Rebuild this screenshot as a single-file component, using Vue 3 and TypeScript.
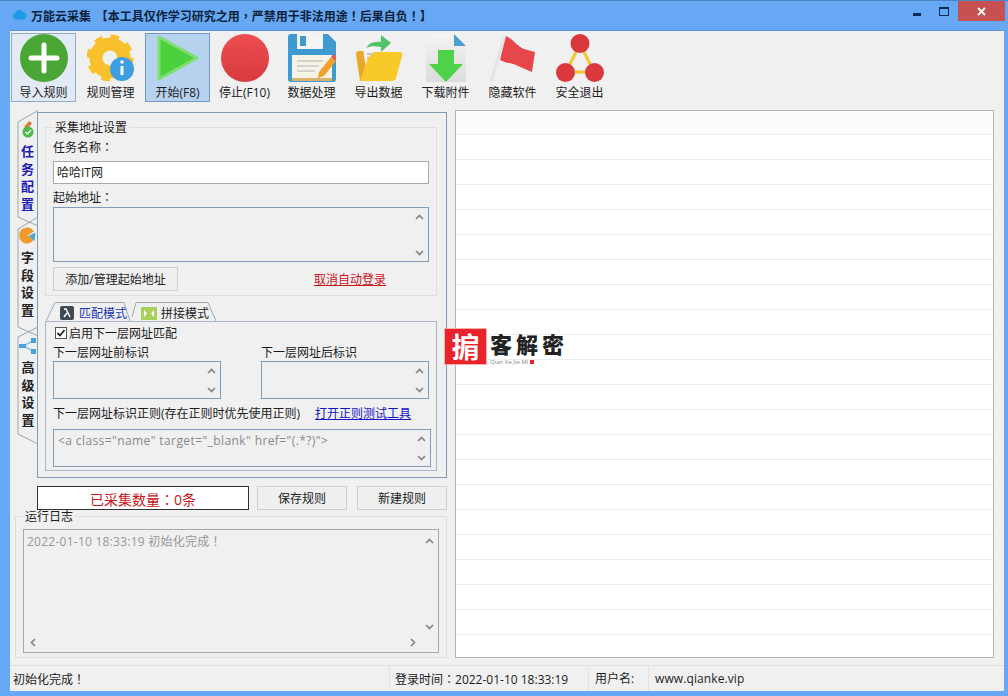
<script setup lang="ts">
const tools = [
  { id: 'add', label: '导入规则', state: 'hover' },
  { id: 'gear', label: '规则管理', state: '' },
  { id: 'play', label: '开始(F8)', state: 'active' },
  { id: 'stop', label: '停止(F10)', state: '' },
  { id: 'save', label: '数据处理', state: '' },
  { id: 'folder', label: '导出数据', state: '' },
  { id: 'file', label: '下载附件', state: '' },
  { id: 'flag', label: '隐藏软件', state: '' },
  { id: 'exit', label: '安全退出', state: '' },
]
const rows = Array.from({ length: 21 }, (_, i) => i)
</script>

<template>
  <div class="window">
    <div class="titlebar">
      <svg class="cloud" width="15" height="11" viewBox="0 0 15 11">
        <path d="M4 10.5a3.4 3.4 0 0 1-.6-6.7A4.2 4.2 0 0 1 11 3a3.8 3.8 0 0 1 .4 7.5z" fill="#1f9bea" />
      </svg>
      <span class="title">万能云采集 【本工具仅作学习研究之用<span class="p">，</span>严禁用于非法用途<span class="p">！</span>后果自负<span class="p">！</span>】</span>
      <div class="controls">
        <i class="min"></i>
        <i class="max"></i>
        <div class="close">
          <svg width="9" height="9" viewBox="0 0 9 9"><path d="M1 1l7 7M8 1L1 8" stroke="#fff" stroke-width="1.8" /></svg>
        </div>
      </div>
    </div>

    <div class="client">
      <div class="toolbar">
        <div v-for="t in tools" :key="t.id" class="tool" :class="t.state">
          <svg class="tool-icon" width="48" height="48" viewBox="0 0 48 48">
            <defs>
              <linearGradient id="redFill" x1="0" y1="0" x2="0" y2="1">
                <stop offset="0" stop-color="#ee4d51" />
                <stop offset="1" stop-color="#d73b3f" />
              </linearGradient>
              <linearGradient id="fileFill" x1="0" y1="0" x2="0" y2="1">
                <stop offset="0" stop-color="#f4f4f4" />
                <stop offset="1" stop-color="#dcdcdc" />
              </linearGradient>
            </defs>
            <template v-if="t.id === 'add'">
              <circle cx="24" cy="24" r="24" fill="#4ba735" />
              <path d="M24 11v26M11 24h26" stroke="#fff" stroke-width="5" stroke-linecap="round" />
            </template>
            <template v-else-if="t.id === 'gear'">
              <circle cx="23" cy="24" r="14" fill="none" stroke="#f8c02c" stroke-width="13" />
              <circle cx="23" cy="24" r="20.5" fill="none" stroke="#f8c02c" stroke-width="6" stroke-dasharray="8.1 8" />
              <circle cx="35" cy="35" r="12" fill="#3d9fe0" />
              <circle cx="35" cy="28" r="1.7" fill="#fff" />
              <path d="M35 32v9" stroke="#fff" stroke-width="3" />
            </template>
            <template v-else-if="t.id === 'play'">
              <path d="M5 3L43 24 5 45z" fill="#4bd13d" stroke="#7fe070" stroke-width="3" stroke-linejoin="round" />
            </template>
            <template v-else-if="t.id === 'stop'">
              <circle cx="24" cy="24" r="24" fill="url(#redFill)" />
            </template>
            <template v-else-if="t.id === 'save'">
              <path d="M3 0h37l8 8v37a3 3 0 0 1-3 3H3a3 3 0 0 1-3-3V3a3 3 0 0 1 3-3z" fill="#3f9ad2" />
              <rect x="9" y="0" width="26" height="15" fill="#f4f4f4" />
              <rect x="12" y="2" width="6" height="10" fill="#3f9ad2" />
              <rect x="4" y="21" width="40" height="23" fill="#f6f2e6" />
              <rect x="4" y="44" width="40" height="3" fill="#d9b36a" />
              <path d="M9 27h26M9 32h22M9 37h18" stroke="#c8c8c8" stroke-width="1.5" />
              <path d="M31 38l12-15 5 4-12 15-6 2z" fill="#f0a030" />
              <path d="M43 23l2.5-3 5 4-2.5 3z" fill="#e85a5a" />
            </template>
            <template v-else-if="t.id === 'folder'">
              <path d="M1 20a3 3 0 0 1 3-3h9l3 3-7 27H5z" fill="#e8a92a" />
              <path d="M8 14l20-1 3 18-20 4z" fill="#f4f4f4" />
              <path d="M12 20h14M12 24h12" stroke="#a8b8c8" stroke-width="1.5" />
              <path d="M13 24l6-6h26a2.500 2.500 0 0 1 2.400 3L41 44a4 4 0 0 1-4 3H5z" fill="#f8c928" />
              <path d="M11 14c3-5 8-7 15-6V1l10 8-10 9v-5c-6-1-11-1-15 1z" fill="#4ec36a" />
            </template>
            <template v-else-if="t.id === 'file'">
              <path d="M4 0h26l14 14v34H4z" fill="url(#fileFill)" />
              <path d="M32 0l12 12H32z" fill="#4b9fd0" />
              <path d="M16 16h16v14h9L24 48 7 30h9z" fill="#4ed24a" />
            </template>
            <template v-else-if="t.id === 'flag'">
              <path d="M15 4L2 47" stroke="#e4e4e4" stroke-width="3" />
              <path d="M17 2c7 3 12 11 18 13l11 3-3 20-14-6c-6-3-13-3-18-6z" fill="#e5474b" />
            </template>
            <template v-else>
              <path d="M24 10L10 38h28z" fill="none" stroke="#f6c42f" stroke-width="3" />
              <circle cx="24" cy="9.500" r="9.500" fill="#d9393d" />
              <circle cx="9.500" cy="38.500" r="9.500" fill="#d9393d" />
              <circle cx="38.500" cy="38.500" r="9.500" fill="#d9393d" />
            </template>
          </svg>
          <span class="tool-label">{{ t.label }}</span>
        </div>
      </div>

      <div class="body">
        <div class="left">
          <div class="config">
            <div class="side-tabs">
              <svg class="tab-lines" width="22" height="340" viewBox="0 0 22 340">
                <path d="M21 .5L1 12v95l20 9M21 107L1 119v98l20 9M21 217L1 227v97l20 10" fill="none" stroke="#9aa5af" />
              </svg>
              <div class="side-tab current t1">
                <svg width="16" height="18" viewBox="0 0 16 18">
                  <path d="M4 7l5-6 3 2-4 6z" fill="#e07a3c" />
                  <circle cx="8" cy="12" r="5.500" fill="#4cb848" />
                  <path d="M5.500 12l2 2 3.500-4" stroke="#fff" stroke-width="1.300" fill="none" />
                </svg>
                <b>任</b><b>务</b><b>配</b><b>置</b>
              </div>
              <div class="side-tab t2">
                <svg width="17" height="17" viewBox="0 0 17 17">
                  <path d="M8.500 8.500L15 4.500A8 8 0 1 0 15 12.500z" fill="#f29b2c" />
                  <path d="M9.500 9L16.500 5.500 15.500 14z" fill="#4ba6d8" />
                </svg>
                <b>字</b><b>段</b><b>设</b><b>置</b>
              </div>
              <div class="side-tab t3">
                <svg width="18" height="16" viewBox="0 0 18 16">
                  <path d="M4 8l10-5M4 8l10 5" stroke="#8cc4e4" stroke-width="1.500" />
                  <rect x="0" y="6" width="7" height="4" fill="#4aa3d8" />
                  <rect x="12" y="0" width="5" height="5" fill="#4aa3d8" />
                  <rect x="12" y="11" width="5" height="5" fill="#4aa3d8" />
                </svg>
                <b>高</b><b>级</b><b>设</b><b>置</b>
              </div>
            </div>

            <div class="panel">
              <fieldset class="group">
                <legend>采集地址设置</legend>
                <div class="field-label first">任务名称<span class="p">：</span></div>
                <div class="input">哈哈IT网</div>
                <div class="field-label second">起始地址<span class="p">：</span></div>
                <div class="memo start-url">
                  <div class="arrows">
                    <svg width="9" height="6" viewBox="0 0 9 6"><path d="M1 5l3.500-3.500L8 5" /></svg>
                    <svg width="9" height="6" viewBox="0 0 9 6"><path d="M1 1l3.500 3.500L8 1" /></svg>
                  </div>
                </div>
                <div class="url-actions">
                  <button class="btn manage">添加/管理起始地址</button>
                  <a class="link-red">取消自动登录</a>
                </div>
              </fieldset>

              <div class="mode-tabs">
                <svg class="mode-lines" width="176" height="20" viewBox="0 0 176 20">
                  <path d="M0 19L9 .5h69l6 18.500M86 15L90 .5h72L170 19" fill="none" stroke="#a0aab4" />
                </svg>
                <div class="mode-tab one">
                  <svg width="14" height="14" viewBox="0 0 14 14">
                    <rect width="14" height="14" rx="2" fill="#3f4a52" />
                    <path d="M4 3h2l4 8M7 7l-3 4" stroke="#fff" stroke-width="1.500" fill="none" />
                  </svg>
                  <span class="mode-current">匹配模式</span>
                </div>
                <div class="mode-tab two">
                  <svg width="16" height="13" viewBox="0 0 16 13">
                    <rect width="16" height="13" fill="#a9d05a" />
                    <path d="M3 3l3 3.500L3 10zM13 3l-3 3.500 3 3.500z" fill="#fff" />
                  </svg>
                  <span>拼接模式</span>
                </div>
              </div>

              <div class="mode-panel">
                <label class="check-row">
                  <span class="check">
                    <svg width="10" height="10" viewBox="0 0 10 10"><path d="M1.500 5l2.500 2.500L8.500 2" stroke="#222" stroke-width="1.800" fill="none" /></svg>
                  </span>
                  启用下一层网址匹配
                </label>
                <div class="pair">
                  <div>
                    <div class="pair-label">下一层网址前标识</div>
                    <div class="memo small">
                      <div class="arrows">
                        <svg width="9" height="6" viewBox="0 0 9 6"><path d="M1 5l3.500-3.500L8 5" /></svg>
                        <svg width="9" height="6" viewBox="0 0 9 6"><path d="M1 1l3.500 3.500L8 1" /></svg>
                      </div>
                    </div>
                  </div>
                  <div>
                    <div class="pair-label">下一层网址后标识</div>
                    <div class="memo small">
                      <div class="arrows">
                        <svg width="9" height="6" viewBox="0 0 9 6"><path d="M1 5l3.500-3.500L8 5" /></svg>
                        <svg width="9" height="6" viewBox="0 0 9 6"><path d="M1 1l3.500 3.500L8 1" /></svg>
                      </div>
                    </div>
                  </div>
                </div>
                <div class="regex-row">
                  <span>下一层网址标识正则(存在正则时优先使用正则)</span>
                  <a class="link-blue">打开正则测试工具</a>
                </div>
                <div class="memo regex">
                  <span class="placeholder">&lt;a class="name" target="_blank" href="(.*?)"&gt;</span>
                  <div class="arrows">
                    <svg width="9" height="6" viewBox="0 0 9 6"><path d="M1 5l3.500-3.500L8 5" /></svg>
                    <svg width="9" height="6" viewBox="0 0 9 6"><path d="M1 1l3.500 3.500L8 1" /></svg>
                  </div>
                </div>
              </div>
            </div>
          </div>

          <div class="count-row">
            <div class="count">已采集数量<span class="p">：</span>0条</div>
            <button class="btn rule">保存规则</button>
            <button class="btn rule">新建规则</button>
          </div>

          <fieldset class="group log-group">
            <legend>运行日志</legend>
            <div class="log">
              <span class="log-text">2022-01-10 18:33:19 初始化完成<span class="p">！</span></span>
              <div class="arrows log-v">
                <svg width="9" height="6" viewBox="0 0 9 6"><path d="M1 5l3.500-3.500L8 5" /></svg>
                <svg width="9" height="6" viewBox="0 0 9 6"><path d="M1 1l3.500 3.500L8 1" /></svg>
              </div>
              <div class="log-h">
                <svg width="6" height="9" viewBox="0 0 6 9"><path d="M5 1L1.500 4.500 5 8" /></svg>
                <svg width="6" height="9" viewBox="0 0 6 9"><path d="M1 1l3.500 3.500L1 8" /></svg>
              </div>
            </div>
          </fieldset>
        </div>

        <div class="list">
          <div class="list-head"></div>
          <div v-for="r in rows" :key="r" class="list-row"></div>
        </div>
      </div>

      <div class="status">
        <div class="cell msg">初始化完成<span class="p">！</span></div>
        <div class="cell time">登录时间<span class="p">：</span>2022-01-10 18:33:19</div>
        <div class="cell user">用户名:</div>
        <div class="cell site">www.qianke.vip</div>
      </div>
    </div>

    <!-- watermark sits on top of the window -->
    <div class="watermark">
      <div class="seal"><span>掮</span></div>
      <div class="mark-text">
        <div class="mark-name">客解密</div>
        <div class="mark-sub">Qian Ke Jie Mi <i></i></div>
      </div>
    </div>
  </div>
</template>

<style scoped>
.window {
  position: relative;
  width: 1008px;
  height: 696px;
  box-sizing: border-box;
  display: flex;
  flex-direction: column;
  background: #66a8f3;
  border-top: 1px solid #4d86c4;
  font: 12px/17px "Open Sans", "Noto Sans CJK SC", sans-serif;
  color: #1c1c1c;
  overflow: hidden;
}
.p {
  font-family: "Noto Sans CJK TC", sans-serif;
}
.titlebar {
  height: 29px;
  flex: none;
  display: flex;
  align-items: flex-start;
  padding-left: 12px;
  border-bottom: 0;
}
.cloud {
  margin-top: 8px;
}
.title {
  margin-left: 4px;
  margin-top: 6px;
  font-family: "Noto Sans CJK SC", sans-serif;
  font-weight: 700;
  color: #0b1f3a;
  white-space: pre;
  word-spacing: 2px;
}
.controls {
  margin-left: auto;
  margin-right: 3px;
  display: flex;
  align-items: flex-start;
}
.min {
  width: 8px;
  height: 3px;
  margin-top: 12px;
  margin-right: 18px;
  background: #0b2a55;
}
.max {
  width: 8px;
  height: 6px;
  margin-top: 6px;
  margin-right: 9px;
  border: 1px solid #0b2a55;
  border-top-width: 2px;
}
.close {
  width: 47px;
  height: 20px;
  background: #c75050;
  display: flex;
  align-items: center;
  justify-content: center;
}
.client {
  flex: 1;
  margin: 0 4px 5px 10px;
  display: flex;
  flex-direction: column;
  background: #f0f0f0;
  border-top: 1px solid #5d93cf;
  min-height: 0;
}
.toolbar {
  height: 79px;
  flex: none;
  box-sizing: border-box;
  padding: 2px 0 0 1px;
  display: flex;
  gap: 2px;
}
.tool {
  width: 65px;
  height: 69px;
  box-sizing: border-box;
  display: flex;
  flex-direction: column;
  align-items: center;
  border: 1px solid transparent;
}
.tool.hover {
  background: #e2ebf5;
  border-color: #8fadcb;
}
.tool.active {
  background: #b6d2ee;
  border-color: #7099c4;
}
.tool-icon {
  flex: none;
}
.tool-label {
  margin-top: 2px;
  white-space: nowrap;
}
.body {
  flex: 1;
  display: flex;
  min-height: 0;
  padding-left: 5px;
}
.left {
  width: 432px;
  flex: none;
}
.config {
  display: flex;
  height: 366px;
  margin-top: 2px;
  padding-left: 2px;
}
.side-tabs {
  position: relative;
  width: 20px;
  flex: none;
}
.tab-lines {
  position: absolute;
  top: -2px;
  left: 0;
}
.side-tab {
  display: flex;
  flex-direction: column;
  align-items: center;
  width: 20px;
  padding-left: 1px;
}
.side-tab b {
  display: block;
  height: 17.700px;
  line-height: 17.700px;
  font-family: "Noto Sans CJK SC", sans-serif;
  font-size: 13px;
  font-weight: 700;
  color: #222;
}
.side-tab svg {
  margin-bottom: 4px;
}
.current b {
  color: #1c1cb4;
}
.t1 {
  height: 114px;
  padding-top: 8px;
  box-sizing: border-box;
}
.t2 {
  height: 110px;
  padding-top: 1px;
  box-sizing: border-box;
}
.t3 {
  padding-top: 2px;
}
.panel {
  width: 410px;
  box-sizing: border-box;
  border: 1px solid #7f9db9;
  padding: 6px 9px 0 7px;
}
.group {
  margin: 0;
  padding: 0 7px 4px;
  min-width: 0;
  border: 1px solid #dedede;
}
.group legend {
  margin-left: 0;
  padding: 0 2px;
  line-height: 17px;
}
.field-label {
  height: 17px;
}
.field-label.first {
  margin-top: 2px;
}
.field-label.second {
  margin-top: 4px;
}
.input {
  margin-top: 6px;
  height: 23px;
  box-sizing: border-box;
  border: 1px solid #a9a9a9;
  background: #fff;
  padding: 2px 3px;
}
.memo {
  box-sizing: border-box;
  border: 1px solid #7f9db9;
  background: #f0f0f0;
  display: flex;
  justify-content: space-between;
  padding: 6px 4px 5px 4px;
}
.start-url {
  margin-top: 2px;
  height: 55px;
}
.arrows {
  margin-left: auto;
  display: flex;
  flex-direction: column;
  justify-content: space-between;
}
.arrows svg,
.log-h svg {
  display: block;
}
.arrows path,
.log-h path {
  fill: none;
  stroke: #858585;
  stroke-width: 1.700;
}
.url-actions {
  margin-top: 5px;
  display: flex;
  align-items: center;
}
.btn {
  box-sizing: border-box;
  height: 24px;
  padding: 0;
  border: 1px solid #cfcfcf;
  background: #efefef;
  font: inherit;
  color: #222;
}
.manage {
  width: 125px;
}
.link-red {
  margin-left: 136px;
  color: #c8141c;
  text-decoration: underline;
}
.mode-tabs {
  position: relative;
  margin-top: 6px;
  height: 19px;
  padding-top: 3px;
  box-sizing: border-box;
  display: flex;
  align-items: center;
}
.mode-lines {
  position: absolute;
  top: 0;
  left: 1px;
}
.mode-tab {
  display: flex;
  align-items: center;
}
.mode-tab.one {
  margin-left: 15px;
}
.mode-tab.one span {
  margin-left: 5px;
}
.mode-tab.two {
  margin-left: 14px;
}
.mode-tab.two span {
  margin-left: 4px;
}
.mode-current {
  color: #2034b8;
}
.mode-panel {
  height: 150px;
  box-sizing: border-box;
  border: 1px solid #a9b7c4;
  padding: 5px 5px 0 7px;
}
.check-row {
  display: flex;
  align-items: center;
  height: 12px;
}
.check {
  width: 12px;
  height: 12px;
  box-sizing: border-box;
  border: 1px solid #555;
  background: #fff;
  margin: 0 2px 0 2px;
  display: flex;
  align-items: center;
  justify-content: center;
}
.pair {
  margin-top: 5px;
  display: grid;
  grid-template-columns: 168px 168px;
  column-gap: 40px;
}
.pair-label {
  height: 17px;
}
.small {
  height: 38px;
}
.regex-row {
  margin-top: 6px;
  height: 17px;
  display: flex;
}
.link-blue {
  margin-left: 15px;
  color: #1414c4;
  text-decoration: underline;
}
.regex {
  margin-top: 7px;
  width: 378px;
  height: 38px;
}
.placeholder {
  color: #8a8a8a;
  line-height: 17px;
  margin-top: -4px;
  white-space: nowrap;
  letter-spacing: 0.4px;
}
.count-row {
  margin-top: 8px;
  margin-left: 22px;
  height: 24px;
  display: flex;
}
.count {
  width: 212px;
  box-sizing: border-box;
  border: 1px solid #333;
  background: #fff;
  color: #c8141c;
  font-size: 14px;
  line-height: 24px;
  text-align: center;
}
.rule {
  width: 90px;
  margin-left: 8px;
}
.rule:last-child {
  margin-left: 10px;
}
.log-group legend {
  line-height: 13px;
}
.log {
  margin-top: 6px;
  height: 124px;
  box-sizing: border-box;
  border: 1px solid #a8a8a8;
  padding: 2px 4px 5px 3px;
  display: grid;
  grid-template-columns: 1fr 10px;
  grid-template-rows: 1fr 9px;
  row-gap: 8px;
}
.log-text {
  color: #979797;
  letter-spacing: 0.25px;
}
.log-v {
  padding: 6px 0 0;
}
.log-h {
  grid-column: 1 / 3;
  display: flex;
  justify-content: space-between;
  padding: 0 18px 0 3px;
}
.list {
  width: 539px;
  height: 548px;
  margin-left: 8px;
  box-sizing: border-box;
  border: 1px solid #b4b4b4;
  background: #fff;
  overflow: hidden;
}
.list-head {
  height: 23px;
  background: #fcfcfc;
  border-bottom: 1px solid #ececec;
}
.list-row {
  height: 24px;
  border-bottom: 1px solid #ececec;
}
.status {
  flex: none;
  height: 26px;
  box-sizing: border-box;
  border-top: 1px solid #dddddd;
  display: flex;
  line-height: 25px;
}
.cell {
  box-sizing: border-box;
  padding-left: 5px;
  border-right: 1px solid #e2e2e2;
  white-space: nowrap;
}
.msg {
  width: 380px;
  padding-left: 3px;
}
.time {
  width: 199px;
}
.user {
  width: 60px;
  padding-left: 6px;
}
.site {
  border-right: 0;
  padding-left: 6px;
  letter-spacing: 0.1px;
}
.watermark {
  position: absolute;
  left: 445px;
  top: 328px;
  display: flex;
  align-items: flex-start;
}
.seal {
  width: 41px;
  height: 35px;
  box-sizing: border-box;
  background: #e8242a;
  outline: 1px solid #f6b0b0;
  display: flex;
  align-items: center;
  justify-content: center;
}
.seal span {
  color: #fff;
  font-family: "Noto Sans CJK SC", sans-serif;
  font-size: 28px;
  line-height: 35px;
  font-weight: 700;
}
.mark-text {
  margin-left: 4px;
  margin-top: 2px;
}
.mark-name {
  font-family: "Noto Sans CJK SC", sans-serif;
  font-size: 22px;
  line-height: 24px;
  font-weight: 900;
  letter-spacing: 4px;
  color: #222;
}
.mark-sub {
  margin-top: 3px;
  font-size: 6px;
  line-height: 8px;
  color: #888;
  display: flex;
  align-items: center;
  gap: 2px;
}
.mark-sub i {
  width: 4px;
  height: 4px;
  background: #e8242a;
}
</style>

<style>
html,
body {
  margin: 0;
  overflow: hidden;
}
</style>
